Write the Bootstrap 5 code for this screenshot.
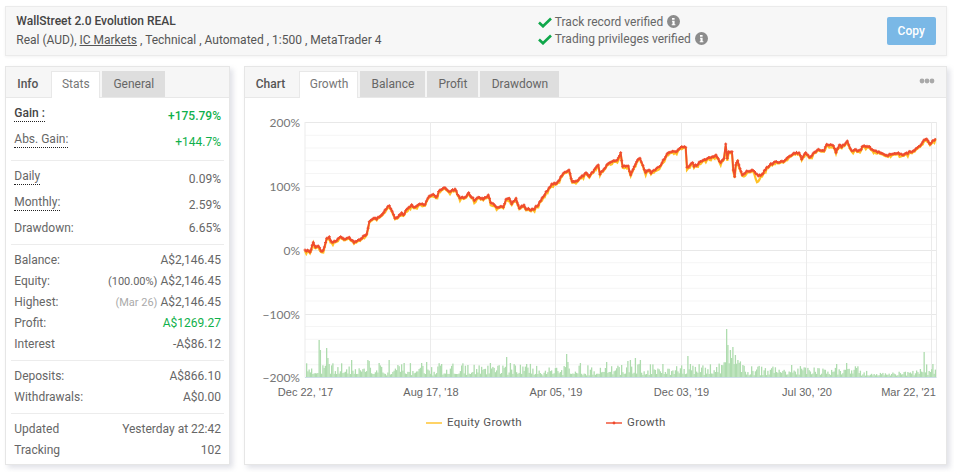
<!DOCTYPE html>
<html lang="en">
<head>
<meta charset="utf-8">
<title>WallStreet 2.0 Evolution REAL</title>
<link rel="stylesheet" href="https://cdn.jsdelivr.net/npm/bootstrap@5.3.0/dist/css/bootstrap.min.css">
<style>
html,body{height:472px;overflow:hidden;background:#fff}
body{font-family:Roboto,"Liberation Sans",sans-serif;font-size:12px;color:#666;line-height:16px;padding:6px 7.3px 0 5.3px}
.sysbar{height:50px;background:#f7f7f7;border:1px solid #ebebeb;box-shadow:0 1px 3px rgba(0,0,0,.05);padding:0 10px 0 10px}
.sys-main{width:521.5px}
.sys-title{font-weight:500;color:#444;margin-bottom:2px;line-height:17px}
.sys-sub{color:#555;line-height:17px;font-size:12px}
.sys-sub a{color:#555}
.sys-check{flex:1 1 auto;color:#666;font-size:12px;line-height:17px}
.sys-check svg{display:inline-block;vertical-align:-2px}
.tick{margin-right:3px}
.info-dot{margin-left:4px}
.copy-btn{width:49px;height:28px;padding:0;font-size:12px;font-weight:500;background:#7ab8e6;border:0;border-radius:2px;color:#fff}
.panes{margin-top:10px;gap:14px;height:399px}
.panel-box{border:1px solid #e6e6e6;border-radius:0;box-shadow:3px 3px 5px rgba(120,125,150,.22);background:#fff}
.stats-box{width:224.7px;flex:none}
.chart-box{flex:1 1 auto;min-width:0;position:relative}
.panel-head{height:31px;background:#f6f6f6;border-bottom:1px solid #e8e8e8;padding:4px 0 0 0;align-items:stretch}
.panel-head .nav-link,.head-label{font-size:12px;line-height:26px;padding:0;height:26px;border:0;border-radius:0;color:#666;text-align:center}
.head-label{font-weight:500;color:#555}
.panel-head .nav-link{background:#dedede;margin-right:2px}
.panel-head .nav-link.active{background:#fff;color:#777;border:1px solid #e8e8e8;border-bottom:0;height:27px;line-height:25px;position:relative}
.w-info{width:43px;margin-right:2px}.w-stats{width:49px;margin-right:3px}.w-general{width:63px}
.w-chart{width:51px;margin-right:3.5px}.w-growth{width:59px}.w-balance{width:65px}.w-profit{width:51px}.w-draw{width:79px}
.more-dots{position:absolute;right:11px;top:11px;display:block}
.stat-list{padding:0 5px 0 5px}
.stat-group{border-bottom:1px solid #ececec;padding:0 3px 0 3px}
.stat-group:last-child{border-bottom:0}
.stat-line{height:21px;line-height:21px}
.dim{color:#aaa;font-size:11px}
.soft{font-size:11px}
.tall{height:26px;line-height:22px}
.lbl{border-bottom:1px dotted #222;line-height:15px;display:inline-block;height:16px}
.strong{font-weight:500;color:#444}
.up{color:#10b04b}
.val-shift{padding-top:3px}
.g1{padding-top:4px;height:63px}
.g2{padding-top:4px;height:84px}
.g3{padding-top:5px;height:116px}
.g4{padding-top:5px;height:53px}
.g5{padding-top:5px}
.plot{display:block;width:701px;height:366px}
.plot text{font-family:"Liberation Sans",sans-serif;font-size:11px;fill:#666}
.plot .ylab{font-family:Lato,sans-serif;font-size:12px;fill:#777;text-anchor:end}
.plot .xlab{text-anchor:middle}
.plot .leg{font-family:Roboto,sans-serif;letter-spacing:.3px;font-size:11.5px;fill:#555}
</style>
</head>
<body>
<div class="sysbar d-flex align-items-center">
  <div class="sys-main">
    <div class="sys-title">WallStreet 2.0 Evolution REAL</div>
    <div class="sys-sub">Real (AUD), <a href="#">IC Markets</a> , Technical , Automated , 1:500 , MetaTrader 4</div>
  </div>
  <div class="sys-check">
    <div><svg class="tick" width="14" height="11" viewBox="0 0 14 11"><path d="M1 5.5 5 9.3 13 1.5" fill="none" stroke="#0fa74a" stroke-width="2.6"/></svg>Track record verified<svg class="info-dot" width="13" height="13" viewBox="0 0 13 13"><circle cx="6.5" cy="6.5" r="6.5" fill="#8c8c8c"/><path d="M5 3h2.6v1.8H5zM5 5.8h2.6v3.4h.8v1H4.7v-1h.8V6.8H5z" fill="#fff"/></svg></div>
    <div><svg class="tick" width="14" height="11" viewBox="0 0 14 11"><path d="M1 5.5 5 9.3 13 1.5" fill="none" stroke="#0fa74a" stroke-width="2.6"/></svg>Trading privileges verified<svg class="info-dot" width="13" height="13" viewBox="0 0 13 13"><circle cx="6.5" cy="6.5" r="6.5" fill="#8c8c8c"/><path d="M5 3h2.6v1.8H5zM5 5.8h2.6v3.4h.8v1H4.7v-1h.8V6.8H5z" fill="#fff"/></svg></div>
  </div>
  <button type="button" class="btn btn-primary copy-btn">Copy</button>
</div>
<div class="panes d-flex">
  <div class="card panel-box stats-box">
    <ul class="nav panel-head d-flex">
      <li class="nav-item head-label w-info">Info</li>
      <li class="nav-item"><a class="nav-link active w-stats" href="#">Stats</a></li>
      <li class="nav-item"><a class="nav-link w-general" href="#">General</a></li>
    </ul>
    <div class="stat-list">
      <div class="stat-group g1">
        <div class="d-flex justify-content-between stat-line tall"><span><span class="lbl strong">Gain :</span></span><span class="strong up val-shift">+175.79%</span></div>
        <div class="d-flex justify-content-between stat-line tall"><span><span class="lbl">Abs. Gain:</span></span><span class="up val-shift">+144.7%</span></div>
      </div>
      <div class="stat-group g2">
        <div class="d-flex justify-content-between stat-line tall"><span><span class="lbl">Daily</span></span><span class="val-shift">0.09%</span></div>
        <div class="d-flex justify-content-between stat-line tall"><span><span class="lbl">Monthly:</span></span><span class="val-shift">2.59%</span></div>
        <div class="d-flex justify-content-between stat-line tall"><span>Drawdown:</span><span>6.65%</span></div>
      </div>
      <div class="stat-group g3">
        <div class="d-flex justify-content-between stat-line"><span>Balance:</span><span>A$2,146.45</span></div>
        <div class="d-flex justify-content-between stat-line"><span>Equity:</span><span><span class="soft">(100.00%)</span> A$2,146.45</span></div>
        <div class="d-flex justify-content-between stat-line"><span>Highest:</span><span><span class="dim">(Mar 26)</span> A$2,146.45</span></div>
        <div class="d-flex justify-content-between stat-line"><span>Profit:</span><span class="up">A$1269.27</span></div>
        <div class="d-flex justify-content-between stat-line"><span>Interest</span><span>-A$86.12</span></div>
      </div>
      <div class="stat-group g4">
        <div class="d-flex justify-content-between stat-line"><span>Deposits:</span><span>A$866.10</span></div>
        <div class="d-flex justify-content-between stat-line"><span>Withdrawals:</span><span>A$0.00</span></div>
      </div>
      <div class="stat-group g5">
        <div class="d-flex justify-content-between stat-line"><span>Updated</span><span>Yesterday at 22:42</span></div>
        <div class="d-flex justify-content-between stat-line"><span>Tracking</span><span>102</span></div>
      </div>
    </div>
  </div>
  <div class="card panel-box chart-box">
    <ul class="nav panel-head d-flex">
      <li class="nav-item head-label w-chart">Chart</li>
      <li class="nav-item"><a class="nav-link active w-growth" href="#">Growth</a></li>
      <li class="nav-item"><a class="nav-link w-balance" href="#">Balance</a></li>
      <li class="nav-item"><a class="nav-link w-profit" href="#">Profit</a></li>
      <li class="nav-item"><a class="nav-link w-draw" href="#">Drawdown</a></li>
    </ul>
    <svg class="more-dots" width="16" height="6" viewBox="0 0 16 6"><circle cx="3" cy="3" r="2.4" fill="#a9a9a9"/><circle cx="8" cy="3" r="2.4" fill="#a9a9a9"/><circle cx="13" cy="3" r="2.4" fill="#a9a9a9"/></svg>
    <svg class="plot" id="plot" viewBox="245 98 701 366">
      <g id="grid"></g>
      <g id="bars" fill="#aedcae"></g>
      <path id="eq" fill="none" stroke="#ffc125" stroke-width="2.2"/>
      <path id="gr" fill="none" stroke="#ef4d2e" stroke-width="1.8" stroke-linejoin="round"/>
      <path id="mk" fill="none" stroke="#ef4d2e" stroke-width="1"/>
      <text class="ylab" x="300" y="127">200%</text>
      <text class="ylab" x="300" y="191">100%</text>
      <text class="ylab" x="300" y="255">0%</text>
      <text class="ylab" x="300" y="319">−100%</text>
      <text class="ylab" x="300" y="382">−200%</text>
      <text class="xlab" x="305.5" y="396">Dec 22, '17</text>
      <text class="xlab" x="431" y="396">Aug 17, '18</text>
      <text class="xlab" x="556" y="396">Apr 05, '19</text>
      <text class="xlab" x="681.5" y="396">Dec 03, '19</text>
      <text class="xlab" x="807" y="396">Jul 30, '20</text>
      <text class="xlab" x="908.5" y="396">Mar 22, '21</text>
      <path d="M426 423h16" stroke="#ffc125" stroke-width="1.4" fill="none"/>
      <path d="M606 423h16" stroke="#f0492c" stroke-width="1.4" fill="none"/>
      <circle cx="614" cy="423" r="1.4" fill="#f0492c"/>
      <text class="leg" x="447" y="426">Equity Growth</text>
      <text class="leg" x="627" y="426">Growth</text>
    </svg>
  </div>
</div>
<script src="https://cdn.jsdelivr.net/npm/bootstrap@5.3.0/dist/js/bootstrap.bundle.min.js"></script>
<script>
(function(){
  var NS="http://www.w3.org/2000/svg";
  var seed=12345;function rnd(){seed=(seed*16807)%2147483647;return seed/2147483647;}
  function line(p,x1,y1,x2,y2,c,w){var l=document.createElementNS(NS,"line");l.setAttribute("x1",x1);l.setAttribute("y1",y1);l.setAttribute("x2",x2);l.setAttribute("y2",y2);l.setAttribute("stroke",c);l.setAttribute("stroke-width",w);p.appendChild(l);}
  var g=document.getElementById("grid");
  for(var i=0;i<=20;i++){var y=122.5+i*12.75;if(i%5)line(g,305,y,936.5,y,"#f5f5f5",1);}
  [122.5,186.5,250.5,314.5].forEach(function(y){line(g,305,y,936.5,y,"#e8e8e8",1);});
  [305,430.5,555.5,681.5,806.5,931.5,936.5].forEach(function(x){line(g,x,122,x,377.5,"#ebebeb",1);});
  line(g,305,377.5,936.5,377.5,"#ccdde6",1);
  var P=[305,250,310,252.3,313.3,242.3,315.7,247.3,318.3,246,321,251,323.3,250,326.7,238.3,329.3,236.7,331.7,242,336.7,240.7,340.7,236.7,344,239.3,349.3,237.3,354,242.7,360,240,363.3,236,366.7,234,369.3,221.7,373.3,218.3,376.7,219.3,381.7,215,385,210,389.3,205.7,395,218.3,398.3,216.7,401.7,212.7,403.3,215,406.7,209.3,411.7,204.7,414,207.3,418.3,204.7,425,204.7,429.3,196,433.3,194.3,436,197.3,440,190,445,187.7,450,191.7,455,189,460,198.3,465,197.3,468.7,192.7,474.3,200.7,478.3,197.3,483.3,199.3,488.3,195,490.7,202.7,496.7,207.3,503.3,207.3,506,199.3,509.3,198.3,511.7,204,516,198.3,519.3,208.3,524,205,526,209.3,533.3,209.3,538.3,205,543.3,196.7,551.7,184,556.7,183.3,563.3,173.3,569,170,572.3,181.7,578.3,180,586,172.7,589.3,176.7,598.3,165,600,174.3,606.7,165,613.3,160.7,617.3,160,620.7,152.7,622.7,166.7,628.3,166,630.7,175,636.7,161.7,640,158.3,645.7,172.7,649,170,651,173.3,659.3,166.7,668.3,152.7,676.7,151.7,681.7,146.7,685.7,147.3,687,167.3,692.7,162.7,694,166.7,703.3,160,716,155,720.7,162.7,724,158.3,725.7,144,727.3,158.3,728.7,151.7,732,151.7,733.3,170,734.7,176.7,735.7,165,737.7,160.7,742.3,175,746.7,171,753.3,170.7,758.3,176,763.3,173.3,766.7,167.3,775,161.7,783.3,161.7,792.7,154.3,799,152.7,801.7,159.3,805.7,152.7,809.3,157.3,818.3,149.3,824,150.7,826.7,144.3,833.3,145.7,836,152.7,839.3,145,841.7,147.3,847.3,141,851.7,150.7,860,150,863.3,146,868.3,146.7,875,150.7,886.7,155.3,898.3,152.7,902.3,155,913.3,150.7,920,146,924,140,926.7,139,930,144.3,935.7,138.3];
  var d="",e="",m="";
  for(var k=0;k<P.length-2;k+=2){
    var x0=P[k],y0=P[k+1],x1=P[k+2],y1=P[k+3],n=Math.max(1,Math.round((x1-x0)/1.3));
    for(var j=0;j<n;j++){
      var t=j/n,x=x0+(x1-x0)*t,y=y0+(y1-y0)*t,a=(j?(rnd()-.5)*2:0);
      d+=(d?"L":"M")+x.toFixed(1)+" "+(y+a).toFixed(1);
      m+="M"+(x-1.5).toFixed(1)+" "+(y+a).toFixed(1)+"h3M"+x.toFixed(1)+" "+(y+a-1.5).toFixed(1)+"v3";
      var dip=(x>754&&x<760)?Math.max(0,7-Math.abs(x-757)*2):0;
      e+=(e?"L":"M")+x.toFixed(1)+" "+(y+a+1+dip+(rnd()>.8?1.5:0)).toFixed(1);
    }
  }
  d+="L935.7 138.3";e+="L935.7 139";
  document.getElementById("gr").setAttribute("d",d);
  document.getElementById("eq").setAttribute("d",e);
  document.getElementById("mk").setAttribute("d",m);
  var S={319:340,320:350,326:348,327:358,329:364,351:360,367:360,369:361,389:360,358:362,379:363,408:362,421:363,426:362,506:357,510:363,566:354,567:362,583:364,598:361,603:358,606:362,613:359,627:361,630:360,635:358,640:360,668:361,687:356,716:367,723:362,726:329,727:345,730:350,731:358,732:347,733:349,735:355,737:360,738:358,740:362,742:365,791:365,836:364,846:363,924:352,920:369,932:364};
  var b=document.getElementById("bars");
  for(var bx=306;bx<936;bx+=1.25){
    var quiet=(bx>860&&bx<915)?.45:((bx>745&&bx<860)?.8:1);
    var h=(3+Math.pow(rnd(),1.7)*11)*quiet;
    if(rnd()<.15)h=1.5+rnd()*2;
    var top=377-h,ix=Math.round(bx);
    if(S[ix]&&bx-ix<.63&&bx-ix>=-.62)top=S[ix];
    if(bx>722&&bx<740)top=Math.min(top,368-rnd()*9);
    var r=document.createElementNS(NS,"rect");
    r.setAttribute("x",bx.toFixed(2));r.setAttribute("y",top.toFixed(1));r.setAttribute("width","1.3");r.setAttribute("height",(377-top).toFixed(1));
    b.appendChild(r);
  }
})();
</script>
</body>
</html>
